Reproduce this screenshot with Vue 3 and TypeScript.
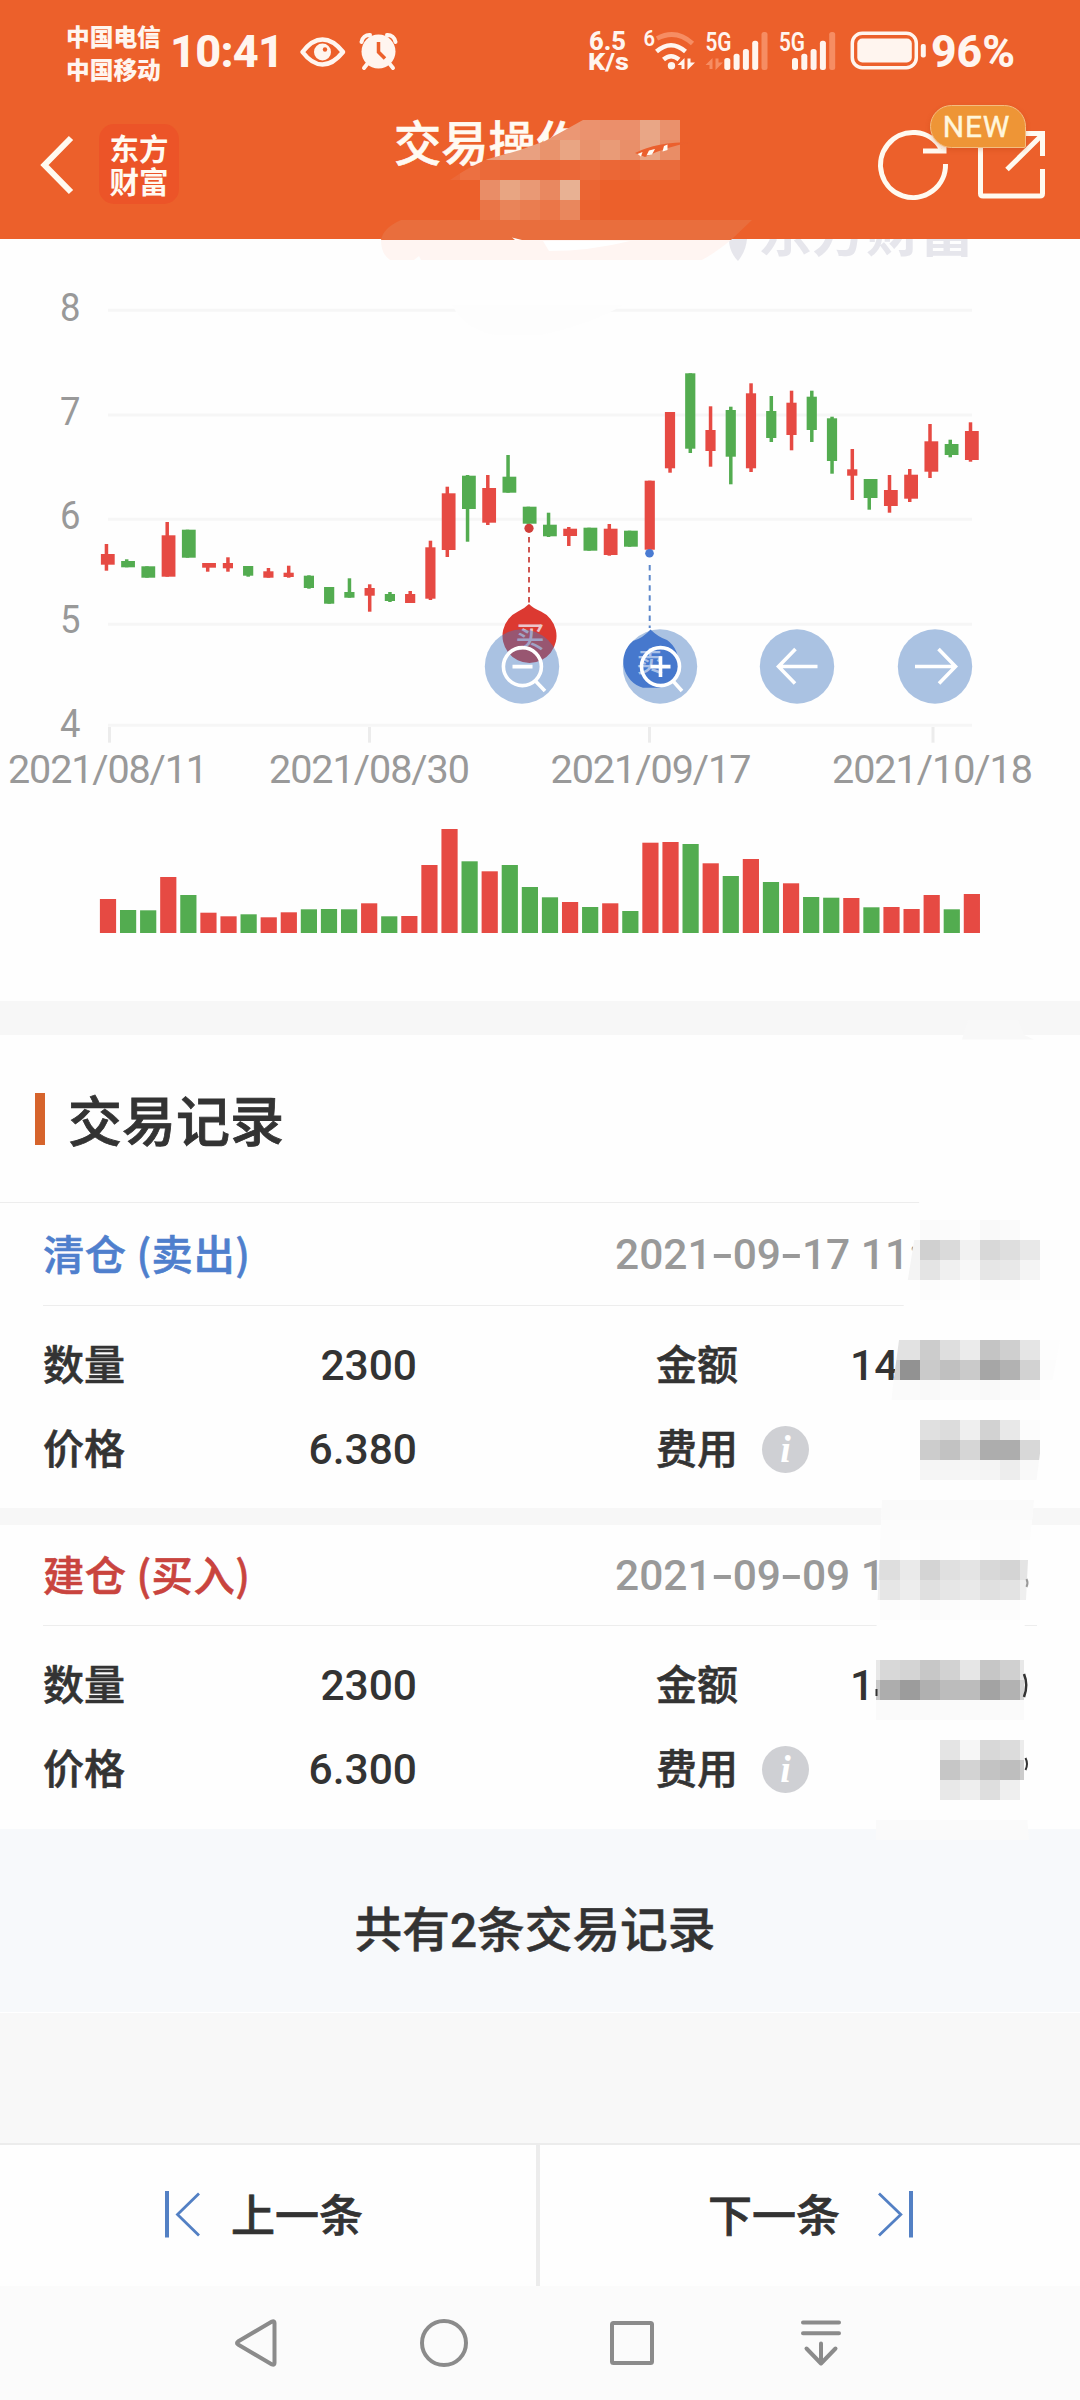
<script setup lang="ts">
interface Candle {
  up: boolean
  high: number
  top: number
  bottom: number
  low: number
}
interface Cell {
  x: number
  y: number
  w: number
  fill: string
}
interface TradeRecord {
  kind: 'sell' | 'buy'
  title: string
  date: string[]
  time: string
  quantity: string
  price: string
  amount: string
}

// up, high, body top, body bottom, low
const rows: [number, number, number, number, number][] = [
  [1, 544, 554, 564.7, 570.7], [0, 559.3, 561, 567.3, 567.3], [0, 566.3, 566.3, 577.7, 577.7],
  [1, 522, 535.3, 576.7, 576.7], [0, 529.7, 529.7, 557.7, 557.7], [1, 563, 563, 567.7, 571.7],
  [1, 557.3, 563, 568.3, 571.7], [0, 566, 566, 575.7, 576.7], [1, 568, 571.3, 577.7, 577.7],
  [1, 565.7, 572.7, 577, 577.7], [0, 575.3, 575.7, 588, 588.7], [0, 587, 587, 603.7, 603.7],
  [0, 578.3, 592, 597.7, 597.7], [1, 584.3, 588, 595.7, 611.7], [0, 592, 594, 601, 602],
  [1, 591, 594, 603, 603], [1, 540.7, 547.3, 598.7, 600], [1, 486.7, 493.3, 550, 557],
  [0, 475, 475.7, 509, 541.7], [1, 475, 488, 522.7, 525], [0, 455, 476.7, 492.7, 492.7],
  [0, 506.7, 506.7, 523.7, 523.7], [0, 512.7, 524.7, 536.3, 537], [1, 527, 528.7, 536, 546],
  [0, 527.7, 527.7, 550.7, 550.7], [1, 524, 528.7, 555, 555.7], [0, 530.7, 530.7, 546.7, 546.7],
  [1, 480.7, 480.7, 549.7, 549.7], [1, 412, 412, 468.3, 472.7], [0, 373.3, 373.3, 448.7, 453],
  [1, 406.3, 430, 451, 466.7], [0, 406.7, 410, 456.7, 484.3], [1, 383.3, 393.3, 468.3, 472],
  [0, 396, 411, 438, 442], [1, 390.7, 402.7, 435, 450.3], [0, 390.7, 396.7, 430, 442],
  [0, 416.7, 418.3, 461, 473.7], [1, 449, 469.3, 475.7, 500], [0, 479, 479, 498, 509.7],
  [1, 475, 490, 506, 512.7], [1, 469, 474.7, 498.7, 502], [1, 424, 441.3, 471.7, 478],
  [0, 439.7, 444, 455, 457.3], [1, 422.3, 431, 460, 461.7],
]
const candles: Candle[] = rows.map(([up, high, top, bottom, low]) => ({ up: up === 1, high, top, bottom, low }))
const volumes = [
  34, 23, 22.7, 56, 38, 20.3, 16.7, 18.7, 15.7, 20.7, 23.7, 24, 23.7, 29.7, 16.7, 17, 68, 104, 71.7, 61.7, 68, 46,
  35.7, 31, 26, 29.7, 22, 90.3, 91, 89, 69.7, 57, 74, 51, 49.7, 36, 35.3, 35, 25.7, 26, 24, 38, 23.7, 39,
]
const wickX = (i: number) => 106.4 + 20.25 * i - (i >= 17 ? 3.4 : 0) - (i >= 38 ? 3.3 : 0)
const isWide = (i: number) => i <= 5 || (i >= 17 && i <= 26) || i >= 38
const bodyX = (i: number) => (isWide(i) ? wickX(i) - 5.5 : wickX(i) - 5.1)
const bodyW = (i: number) => (isWide(i) ? 13.8 : 10.2)
const tone = (up: boolean) => (up ? '#e64a43' : '#53ac50')

const grid = [
  { label: '8', y: 310.3, ty: 320.5 }, { label: '7', y: 415, ty: 424.7 }, { label: '6', y: 519.3, ty: 528.5 },
  { label: '5', y: 624.3, ty: 632.8 }, { label: '4', y: 725.3, ty: 736.7 },
]
const ticks = [
  { label: '2021/08/11', x: 109.5, tx: 8, w: 200 },
  { label: '2021/08/30', x: 369.5, tx: 269, w: 201 },
  { label: '2021/09/17', x: 649.5, tx: 550.5, w: 201 },
  { label: '2021/10/18', x: 933, tx: 832, w: 201 },
]

const records: TradeRecord[] = [
  { kind: 'sell', title: '清仓 (卖出)', date: ['2021', '09', '17'], time: '11:', quantity: '2300', price: '6.380', amount: '14' },
  { kind: 'buy', title: '建仓 (买入)', date: ['2021', '09', '09'], time: '1', quantity: '2300', price: '6.300', amount: '1' },
]

const strip = (x: number, y: number, fills: string): Cell[] =>
  fills.split(' ').map((f, i) => ({ x: x + i * 20, y, w: 20, fill: '#' + (f.length === 2 ? f + f + f : f) }))

const headerCells: Cell[] = [
  ...strip(520, 120, 'ea9875 ea9875 eb9774 eb926e eb8f6b eb8f6b e9a686 ea916c'),
  ...strip(460, 140, 'ea9c7b ea9c7b e9a585 e9a080 e9936c e9a583 e9926c e99b77 e98f69 e9a583 e98d66'),
  ...strip(440, 160, 'eb6838 ec7041 eb6a39 eb6736 eb6736 eb6635 eb6838 eb6c3c eb6736 eb6534 ea6b3b ea6b3b'),
]
const subtitleCells: Cell[] = [
  ...strip(480, 180, 'e98d67 e8a582 e99975 e98860 e8b193 eb6533'),
  ...strip(480, 200, 'ea7547 e98459 ea7d50 eb7648 e9875d eb622f'),
]
const privacyCells: Cell[] = [
  ...strip(920, 1220, 'fa fb fd f9 fa'),
  ...strip(900, 1240, 'f4 d0 da f2 d8 de e8 fd'),
  ...strip(900, 1260, 'f4 e4 f0 f8 e6 e8 f4'),
  ...strip(920, 1280, 'fc fd fe fc fc'),
  ...strip(880, 1340, 'e2 e2 cc de eb c4 cf e5 fd'),
  ...strip(880, 1360, 'd0 92 ca c0 ca a6 b2 d2 fc'),
  ...strip(880, 1380, 'fb fa f9 fa fa f9 fa fb'),
  ...strip(920, 1420, 'e0 dc ef d2 e8 fc'),
  ...strip(920, 1440, 'cc c2 d6 ad ad d8'),
  ...strip(920, 1460, 'f5 f5 f6 f4 ed f9'),
  ...strip(880, 1500, 'fa fa fa fa fa fa fa fa'),
  ...strip(880, 1520, 'fc fc fc fc fc fc fc fc'),
  ...strip(880, 1540, 'fc fe fc fd fe fc fc'),
  ...strip(860, 1560, 'e4 de ea d4 e0 e4 d8 d4 e4'),
  ...strip(860, 1580, 'f0 e6 ed e0 e6 e9 e0 e3 ef'),
  ...strip(880, 1600, 'fc fd fb fc fd fc fc'),
  ...strip(860, 1660, 'e8 d8 d4 c7 d2 e6 c6 d0 e8'),
  ...strip(860, 1680, 'c8 ad 9c b0 bc bc a3 b2 d4'),
  ...strip(860, 1700, 'fa fa fa fa fa fa fa fa fa'),
  ...strip(940, 1740, 'e4 f6 d8 dc ec'),
  ...strip(940, 1760, 'c6 d3 c3 be cc'),
  ...strip(940, 1780, 'e8 ee de ef'),
  ...strip(860, 1820, 'fa fa fa fa fa fa fa fa fa'),
]
const signalBars = [58, 53.7, 49, 40.7, 32]
</script>

<template>
  <div class="screen">
    <header class="top">
      <div class="status">
        <div class="carriers"><span>中国电信</span><span>中国移动</span></div>
        <svg class="status-art" width="920" height="90" viewBox="160 0 920 90">
          <g fill="#fff5ef" font-weight="800">
            <text class="num" x="170" y="67" font-size="45" textLength="114" lengthAdjust="spacing">10:41</text>
            <path d="M302.500 52Q312 39.500 322.500 39.500T343 52Q333 64.500 322.500 64.500T302.500 52Z" fill="none" stroke="#fff5ef" stroke-width="4.500" stroke-linejoin="round" />
            <circle cx="322.500" cy="52" r="8.500" />
            <circle cx="325" cy="49.500" r="2.200" fill="#ec602b" />
            <circle cx="378.500" cy="51.500" r="17" />
            <path d="M361.500 42a8 8 0 0 1 8.500-7M395.500 42a8 8 0 0 0-8.500-7M368 63l-4 5M389 63l4 5" fill="none" stroke="#fff5ef" stroke-width="4" stroke-linecap="round" />
            <path d="M378.500 42v10l6.500 6.500" fill="none" stroke="#ec602b" stroke-width="3.500" />
            <text class="num" x="589" y="50" font-size="25" textLength="37" lengthAdjust="spacingAndGlyphs">6.5</text>
            <text class="num" x="588" y="69.500" font-size="24" textLength="41" lengthAdjust="spacingAndGlyphs">K/s</text>
            <text class="num" x="643.500" y="46" font-size="22.500" textLength="11.500" lengthAdjust="spacingAndGlyphs" font-weight="600">6</text>
            <path d="M657 38.500Q676 28.500 692.500 43.500" fill="none" stroke="#f68d63" stroke-width="4.800" />
            <path d="M656.500 51.500Q671 39 685.500 51.500M663.500 59.500Q671 53 679 59.500" fill="none" stroke="#fff5ef" stroke-width="4.500" />
            <circle cx="671.500" cy="65.700" r="3.700" />
            <path d="M684.500 58v11h-3v-4h-4zM687.500 70V58.500h3v4h4.500z" />
            <path d="M712.500 58v11h-3v-4h-4zM715.500 70V58.500h3v4h4.500z" fill="#f68d63" />
            <text class="num" x="705.500" y="50.500" font-size="25" textLength="26" lengthAdjust="spacingAndGlyphs" font-weight="600">5G</text>
            <text class="num" x="779" y="50.500" font-size="25" textLength="26" lengthAdjust="spacingAndGlyphs" font-weight="600">5G</text>
            <rect v-for="(y, i) in signalBars" :key="'a' + i" :x="724.300 + i * 9.300" :y="y" width="6" :height="70 - y" rx="2.500" :fill="i === 4 ? '#f68d63' : '#fff5ef'" />
            <rect v-for="(y, i) in signalBars" :key="'b' + i" :x="792 + i * 9.300" :y="y" width="6" :height="70 - y" rx="2.500" :fill="i === 4 ? '#f68d63' : '#fff5ef'" />
            <rect x="852.300" y="33.200" width="64" height="34.500" rx="10" fill="none" stroke="#fff5ef" stroke-width="3.500" />
            <rect x="857.300" y="38.500" width="54.500" height="24" rx="5" />
            <rect x="920.800" y="44" width="5" height="13.500" rx="2" />
            <text class="num" x="931" y="67" font-size="45" textLength="84" lengthAdjust="spacingAndGlyphs">96%</text>
          </g>
        </svg>
      </div>
      <div class="nav">
        <svg class="back" width="40" height="66" viewBox="0 0 40 66"><path d="M33 6L6.500 33 33 60" fill="none" stroke="#fffaf0" stroke-width="6" stroke-linejoin="miter" stroke-linecap="butt" /></svg>
        <div class="logo"><span>东方</span><span>财富</span></div>
        <h1 class="title">交易操作</h1>
        <svg class="actions" width="180" height="110" viewBox="870 95 180 110" fill="none" stroke="#fffaf0" stroke-width="5">
          <path d="M945.500 164A32.500 32.500 0 1 1 941 148.500M944 138v13H923" />
          <path d="M1042.500 169v24.500q0 2.500-2.500 2.500h-57q-2.500 0-2.500-2.500V134h20M1022 133.500h20.500V156M1007 169.500L1041 136" />
        </svg>
        <span class="badge">NEW</span>
      </div>
    </header>

    <section class="chart">
      <svg width="1080" height="762" viewBox="0 239 1080 762">
        <text class="mark" x="758" y="251.500" font-size="54" textLength="216">东方财富</text>
        <path d="M729 239h18q-1 12-9 22-9-9-9-22z" fill="#e6e6ec" />
        <g stroke="#f6f6f6" stroke-width="3">
          <line v-for="g in grid" :key="g.label" x1="108" :y1="g.y" x2="972" :y2="g.y" />
        </g>
        <path d="M452 305H623Q590 325 540 335H495Q465 330 452 305Z" fill="#fdfdfd" />
        <g stroke="#ececec" stroke-width="3">
          <line v-for="t in ticks" :key="t.label" :x1="t.x" y1="727" :x2="t.x" y2="742.700" />
        </g>
        <g class="axis">
          <text v-for="g in grid" :key="g.label" x="60" :y="g.ty" textLength="20.500" lengthAdjust="spacingAndGlyphs">{{ g.label }}</text>
          <text v-for="t in ticks" :key="t.label" :x="t.tx" y="783" :textLength="t.w" lengthAdjust="spacing">{{ t.label }}</text>
        </g>
        <g v-for="(c, i) in candles" :key="i" :fill="tone(c.up)">
          <rect :x="wickX(i) - 1.700" :y="c.high" width="3.500" :height="c.low - c.high" />
          <rect :x="bodyX(i)" :y="c.top" :width="bodyW(i)" :height="c.bottom - c.top" />
        </g>
        <rect v-for="(v, i) in volumes" :key="'v' + i" :x="99.900 + i * 20.090" :y="933 - v" width="16.200" :height="v" :fill="tone(candles[i].up)" />

        <circle cx="529" cy="528.300" r="4.600" fill="#d03f3a" />
        <path d="M529 537V605" stroke="#cf5550" stroke-width="2" stroke-dasharray="5.500 4.500" />
        <path d="M529 604Q533 608 541 611.500A27 27 0 1 1 518 611.500Q525 608 529 604Z" fill="#dc3931" />
        <text class="pin" x="530" y="648">买</text>
        <circle cx="649.500" cy="553.300" r="4.300" fill="#4a7bd2" />
        <path d="M649.700 565V628" stroke="#5c88cb" stroke-width="2" stroke-dasharray="5.500 4.600" />

        <g fill="#447ac0" fill-opacity=".45">
          <circle cx="522" cy="666.500" r="37.200" /><circle cx="660" cy="666.500" r="37.200" />
          <circle cx="797" cy="666.500" r="37.200" /><circle cx="935" cy="666.500" r="37.200" />
        </g>
        <path d="M650.500 629.500Q658 637 667 640A27 27 0 0 1 660 687.700H643A27 27 0 0 1 633 641Q643 638 650.500 629.500Z" fill="#4678cd" />
        <text class="pin ghost" x="650" y="672">卖</text>
        <g fill="none" stroke="#fff" stroke-width="3.600">
          <circle cx="522.400" cy="666.600" r="19" /><path d="M512.500 666.600H532.500M535.500 681L545 691" />
          <circle cx="660.500" cy="666.600" r="19" /><path d="M650.500 666.600H670.500M660.500 656.300V677M673 681L682 691" />
          <path d="M817.500 666.500H779M795.500 649L778.500 666.500 795 683.500" />
          <path d="M915 666.500H954M938.500 649L955.500 666.500 939 683.500" />
        </g>
      </svg>
    </section>

    <section class="records">
      <h2 class="heading"><i></i>交易记录</h2>
      <article v-for="r in records" :key="r.kind" class="record">
        <div class="record-head" :class="r.kind">
          <span class="record-title">{{ r.title }}</span>
          <span class="stamp"><template v-for="(d, i) in r.date" :key="i"><b v-if="i" class="dash">-</b>{{ d }}</template> {{ r.time }}</span>
        </div>
        <div class="fields">
          <span>数量</span><span class="value">{{ r.quantity }}</span><span class="second">金额</span><span class="amount">{{ r.amount }}</span>
        </div>
        <div class="fields">
          <span>价格</span><span class="value">{{ r.price }}</span><span class="second">费用</span><span class="info">i</span>
        </div>
      </article>
    </section>

    <div class="summary">共有2条交易记录</div>
    <div class="spacer"></div>

    <div class="pager">
      <button class="prev">
        <svg width="38" height="48" viewBox="165 2190 38 48" fill="none" stroke="#5380c4"><path d="M168 2191V2237.500" stroke-width="4" /><path d="M200 2193.500L178.500 2214.500 200 2235.500" stroke-width="2.800" /></svg>
        <span>上一条</span>
      </button>
      <button class="next">
        <span>下一条</span>
        <svg width="38" height="48" viewBox="878 2190 38 48" fill="none" stroke="#5380c4"><path d="M912 2191V2237.500" stroke-width="4" /><path d="M880 2193.500L901.800 2214.500 880 2235.500" stroke-width="2.800" /></svg>
      </button>
    </div>

    <footer class="system">
      <svg width="1080" height="114" viewBox="0 2286 1080 114" fill="none" stroke="#8b8b8b" stroke-width="4" stroke-linejoin="round" stroke-linecap="round">
        <path d="M238 2341.500L272 2321.500Q274.500 2320.500 274.500 2323V2363Q274.500 2365.500 272 2364.500L238 2344.500Q236 2343 238 2341.500Z" />
        <circle cx="444" cy="2343" r="22" />
        <rect x="612" y="2323" width="40" height="40" rx="1.500" />
        <path d="M803 2322.500H839M803 2333.200H839M821 2343.500V2363M806.500 2348.500L821 2363.500 835.500 2348.500" />
      </svg>
    </footer>

    <svg class="privacy" width="1080" height="2400" viewBox="0 0 1080 2400">
      <defs>
        <clipPath id="title-area"><path d="M450 180Q470 166 488 159L520 150 545 141Q565 130 583 120H680V180Z" /></clipPath>
        <clipPath id="value-area"><path d="M962 1040L919 1203 915 1235 903 1310 893 1385 882 1500 878 1590 876 1640V1840H1029L1024 1780V1640L1028 1560 1034 1500 1043 1430 1062 1330 1080 1240V1040Z" /></clipPath>
      </defs>
      <g clip-path="url(#title-area)" shape-rendering="crispEdges">
        <rect v-for="(c, i) in headerCells" :key="i" :x="c.x" :y="c.y" :width="c.w" height="20" :fill="c.fill" />
      </g>
      <g shape-rendering="crispEdges"><rect v-for="(c, i) in subtitleCells" :key="i" :x="c.x" :y="c.y" :width="c.w" height="20" :fill="c.fill" /></g>
      <path d="M635 153Q656 142 693 142Q665 147 645 157Z" fill="#eb602d" />
      <path d="M637.500 154l5-2-1.500 4.500zM649 150.500l6-1.500-3 5.500-5.500 1zM664 146l-1.500 5.500 5-1.500v-5.500z" fill="#fffaf2" />
      <path d="M401 220H752L731 240H381Q383 228 401 220Z" fill="#e96e3d" />
      <path d="M381 240H731Q715 253 702 260H421L419 256 414 260H390Q381 254 381 240Z" fill="#fff5f2" />
      <path d="M543 241H630Q590 251 549 251Z" fill="#fff" />
      <path d="M512 237.500l6 1.500 4 1h-7z" fill="#fff" />
      <g clip-path="url(#value-area)">
        <rect x="870" y="1040" width="210" height="790" fill="#fefefe" />
        <rect v-for="(c, i) in privacyCells" :key="i" :x="c.x" :y="c.y" :width="c.w" height="20" :fill="c.fill" shape-rendering="crispEdges" />
      </g>
      <path d="M1024 1674q4.500 11 0 23" stroke="#333" stroke-width="2.500" fill="none" />
      <path d="M1025.500 1758q3 6 0 12" stroke="#333" stroke-width="2" fill="none" />
      <path d="M1026.500 1579q2 4 0 8" stroke="#999" stroke-width="2" fill="none" />
      <path d="M876.500 1689v7" stroke="#333" stroke-width="2" />
      <path d="M968 1020H1018L1024 1035 1034 1039.500H962Z" fill="#f8f8f8" />
    </svg>
  </div>
</template>

<style>
body { margin: 0; background: #fefefe; }
</style>

<style scoped>
.screen { position: relative; width: 1080px; height: 2400px; overflow: hidden; display: flex; flex-direction: column; background: #fefefe; color: #333; font-family: Roboto, "Noto Sans CJK SC", sans-serif; }
.top { height: 239px; flex: none; background: #ec602b; color: #fffaf2; }
.status { height: 90px; display: flex; }
.carriers { width: 160px; box-sizing: border-box; padding: 20px 0 0 66px; display: flex; flex-direction: column; font: 800 23.7px/33px "Noto Sans CJK SC", sans-serif; color: #fff5ef; white-space: nowrap; }
.status-art { display: block; }
.num { font-family: Roboto, sans-serif; }
.nav { position: relative; height: 149px; display: flex; }
.back { margin: 42px 0 0 38px; flex: none; }
.logo { margin: 34px 0 0 21px; width: 80px; height: 80px; border-radius: 15px; background: #ec5428; display: flex; flex-direction: column; align-items: center; justify-content: center; font: 700 29.500px/33.5px "Noto Sans CJK SC", sans-serif; flex: none; }
.title { margin: 21px 0 0 215px; width: 250px; font: 500 47.3px/60px "Noto Sans CJK SC", sans-serif; -webkit-text-stroke: .6px currentColor; }
.actions { margin: 5px 0 0 226px; flex: none; }
.badge { position: absolute; left: 930px; top: 14.500px; width: 96px; height: 43px; box-sizing: border-box; border: 1.500px solid #f4bd80; border-radius: 22px 22px 2px 22px; background: #ee9536; color: #fff6dc; font: 400 30px/42px Roboto, sans-serif; text-align: center; padding-right: 3px; letter-spacing: .8px; -webkit-text-stroke: .4px currentColor; box-shadow: 0 2px 5px rgba(170, 60, 10, .25); }
.chart { height: 762px; flex: none; }
.chart svg { display: block; }
.mark { font-family: "Noto Sans CJK SC", sans-serif; font-weight: 700; fill: #e6e6ec; }
.axis { font-family: Roboto, sans-serif; font-size: 39.500px; fill: #999; font-weight: 400; }
.pin { font-family: "Noto Sans CJK SC", sans-serif; font-size: 29px; font-weight: 500; fill: #ecc5cb; text-anchor: middle; }
.ghost { fill: #a9c0e8; font-size: 27px; }
.records { flex: none; border-top: 34px solid #f7f7f7; }
.heading { margin: 0; height: 168px; box-sizing: border-box; padding: 0 0 0 35px; display: flex; align-items: center; font: 500 54px/80px "Noto Sans CJK SC", sans-serif; -webkit-text-stroke: .8px currentColor; border-bottom: 1px solid #ededed; }
.heading i { width: 10px; height: 52px; margin-right: 23px; background: #d6642c; }
.record { height: 305px; padding: 0 43px; }
.record + .record { border-top: 17px solid #f7f7f7; height: 304px; }
.record-head { height: 102px; border-bottom: 1px solid #ededed; display: flex; align-items: center; font-size: 41.300px; font-weight: 500; }
.record + .record .record-head { height: 100px; }
.record-title { width: 572px; white-space: pre; position: relative; top: -2px; font-family: "Noto Sans CJK SC", sans-serif; letter-spacing: .5px; -webkit-text-stroke: .6px currentColor; }
.sell .record-title { color: #4f7fcd; }
.buy .record-title { color: #c9443e; }
.stamp { color: #999; font-size: 42.500px; white-space: nowrap; }
.dash { display: inline-block; width: 21px; text-align: center; transform: scaleX(1.550); font-weight: 500; }
.fields { height: 84px; display: grid; grid-template-columns: 187px 187px 239px 1fr; align-items: center; font-size: 41px; font-weight: 500; }
.fields > span:first-child, .second { position: relative; top: -3px; -webkit-text-stroke: .6px currentColor; }
.record-head + .fields { padding-top: 17px; }
.value { text-align: right; font-size: 42.500px; }
.second { padding-left: 239px; margin-right: -100px; white-space: nowrap; }
.amount { padding-left: 150px; font-size: 42.500px; }
.info { margin-left: 62px; width: 47px; height: 47px; border-radius: 50%; background: #cfd0d4; color: #fff; text-align: center; font: italic 700 38px/46px "Liberation Serif", serif; z-index: 1; }
.amount, .info { position: relative; left: 44px; }
.summary { height: 184px; flex: none; background: #f7f9fb; border-bottom: 1px solid #fff; text-align: center; font: 500 47.700px/204px Roboto, "Noto Sans CJK SC", sans-serif; -webkit-text-stroke: .5px currentColor; box-sizing: border-box; padding-right: 10px; }
.spacer { flex: 1; background: #f8f8f8; }
.pager { height: 143px; flex: none; box-sizing: border-box; border-top: 2px solid #ececec; display: flex; background: #fefefe; }
.pager button { flex: 1; border: 0; padding: 0 0 3px; background: none; color: #333; display: flex; align-items: center; font: 500 44px/60px "Noto Sans CJK SC", sans-serif; -webkit-text-stroke: .7px currentColor; }
.pager span { margin-top: -3px; }
.pager .prev { padding-left: 164px; gap: 29px; border-right: 4px solid #ececec; }
.pager .next { padding-left: 168px; gap: 37px; }
.system { height: 114px; flex: none; background: #fbfbfb; }
.system svg { display: block; }
.privacy { position: absolute; left: 0; top: 0; pointer-events: none; }
</style>
